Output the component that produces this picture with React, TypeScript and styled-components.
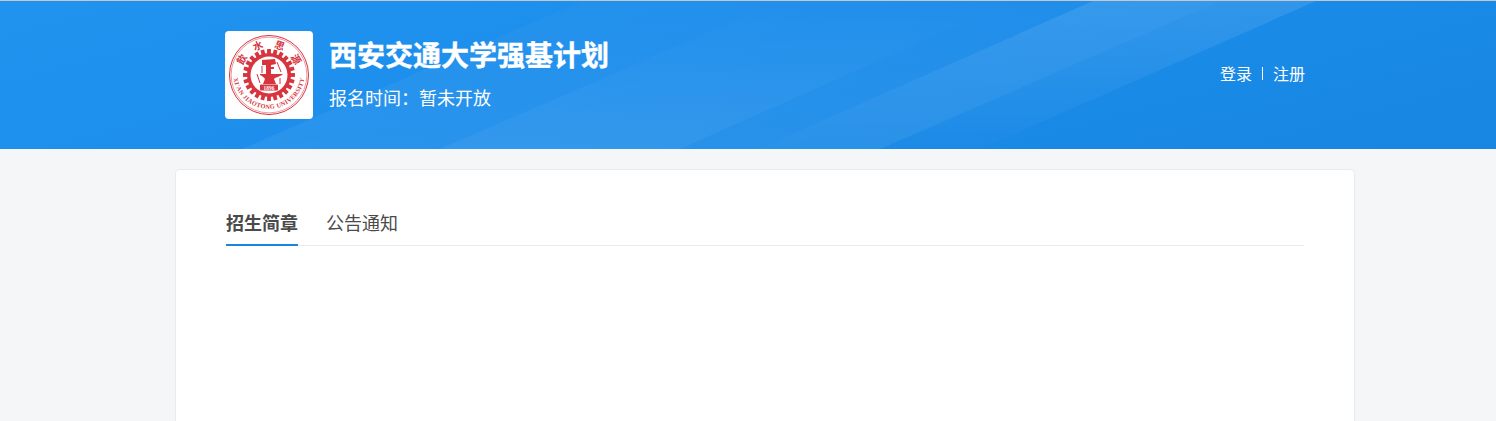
import React from 'react';
import styled, { createGlobalStyle } from 'styled-components';

const GlobalStyle = createGlobalStyle`
  html, body {
    margin: 0;
    padding: 0;
    height: 100%;
    overflow: hidden;
    background-color: #f5f6f8;
    font-family: "Noto Sans CJK SC", "Noto Sans", sans-serif;
  }
`;

const Header = styled.header`
  position: relative;
  height: 148px;
  border-top: 1px solid #c4c8cc;
  overflow: hidden;
  background: linear-gradient(165deg, #2093ef 0%, #1c8deb 45%, #1786e2 100%);
`;

const HeaderBands = styled.svg`
  position: absolute;
  inset: 0;
  width: 100%;
  height: 100%;
`;

const HeaderInner = styled.div`
  position: relative;
  width: 1080px;
  height: 100%;
  margin-left: 225px;
  display: flex;
  align-items: center;
  justify-content: space-between;
`;

const Brand = styled.div`
  display: flex;
  align-items: center;
  gap: 16px;
`;

const LogoBox = styled.div`
  width: 88px;
  height: 88px;
  border-radius: 4px;
  background-color: #fff;
  display: flex;
  align-items: center;
  justify-content: center;
`;

const BrandText = styled.div`
  display: flex;
  flex-direction: column;
  gap: 13px;
  margin-bottom: 4px;
  color: #fff;
`;

const Title = styled.h1`
  margin: 0;
  font-size: 28px;
  line-height: 34px;
  font-weight: 700;
  -webkit-text-stroke: 0.4px #fff;
`;

const Subtitle = styled.p`
  margin: 0;
  font-size: 18px;
  line-height: 26px;
`;

const AuthLinks = styled.nav`
  display: flex;
  align-items: center;
  color: #fff;
  font-size: 16px;
  line-height: 22px;
  margin-top: -4px;
`;

const AuthLink = styled.a`
  color: inherit;
  text-decoration: none;
`;

const AuthDivider = styled.span`
  width: 1px;
  height: 13px;
  margin: 0 10px;
  background-color: #fff;
`;

const Main = styled.main`
  width: 1180px;
  margin: 20px 0 0 175px;
  box-sizing: border-box;
  min-height: 400px;
  padding: 32px 50px 0;
  background-color: #fff;
  border: 1px solid #e8eaec;
  border-radius: 4px;
`;

const Tabs = styled.div`
  display: flex;
  gap: 28px;
  border-bottom: 1px solid #e8eaec;
`;

const Tab = styled.div<{ $active?: boolean }>`
  height: 44px;
  box-sizing: border-box;
  margin-bottom: -1px;
  font-size: 18px;
  line-height: 40px;
  font-weight: ${(p) => (p.$active ? 700 : 400)};
  color: #4a4a4a;
  border-bottom: 2px solid ${(p) => (p.$active ? '#1786e2' : 'transparent')};
`;

const SEAL = '#d8343e';

function gearTeeth() {
  const teeth = [];
  for (let i = 0; i < 24; i++) {
    teeth.push(<rect key={i} x="-1.9" y="-26" width="3.8" height="6" fill={SEAL} transform={`rotate(${i * 15})`} />);
  }
  return teeth;
}

function SchoolSeal() {
  return (
    <svg width="82" height="82" viewBox="-41 -41 82 82">
      <defs>
        <path id="sealBottom" d="M -35.8 -2 A 35.8 35.8 0 0 0 35.8 -2" />
      </defs>
      <circle r="39.5" fill="none" stroke={SEAL} strokeWidth="1" />
      <circle r="37.9" fill="none" stroke={SEAL} strokeWidth="0.5" />
      <g fill={SEAL} fontFamily='"Noto Sans CJK TC", sans-serif' fontSize="10" fontWeight="700" textAnchor="middle">
        <text transform="rotate(-60) translate(0 -27.6)">飲</text>
        <text transform="rotate(-21) translate(0 -27.6)">水</text>
        <text transform="rotate(20) translate(0 -27.6)">思</text>
        <text transform="rotate(60) translate(0 -27.6)">源</text>
      </g>
      <text fill={SEAL} fontFamily='"Liberation Serif", serif' fontSize="6.3" fontWeight="700" letterSpacing="0.3">
        <textPath href="#sealBottom" startOffset="50%" textAnchor="middle">
          XI'AN JIAOTONG UNIVERSITY
        </textPath>
      </text>
      {gearTeeth()}
      <circle r="22" fill={SEAL} />
      <circle r="18.5" fill="#fff" />
      <path
        fill={SEAL}
        d="M -7 -15 L 6 -16 L 7 -11 L 2 -10 L 2 -8 L 5 -8 L 5 -6 L 2 -6 L 2 -1 L 14 -1 C 11 2 7 2 5 4 L 7 9 L -6 9 L -4 4 C -5 2 -7 1 -9 0 L -9 -1 L -3 -1 L -3 -10 L -7 -10 Z"
      />
      <path fill="none" stroke={SEAL} strokeWidth="1" d="M -7 -9 L -7 -2 M 8 -13 L 12 -3 M -12 -1 L -9 8 M 11 3 L 11 9" />
      <rect x="-9" y="9.5" width="18" height="6" rx="0.8" fill={SEAL} />
      <text x="0" y="14.6" fill="#fff" fontFamily='"Liberation Serif", serif' fontSize="5.4" fontWeight="700" textAnchor="middle">
        1896
      </text>
    </svg>
  );
}

function Bands() {
  return (
    <HeaderBands viewBox="0 0 1496 148" preserveAspectRatio="none">
      <defs>
        <linearGradient id="bandRise" x1="0" y1="0" x2="0" y2="1">
          <stop offset="0" stopColor="#fff" stopOpacity="0.02" />
          <stop offset="1" stopColor="#fff" stopOpacity="0.06" />
        </linearGradient>
        <linearGradient id="bandMid" x1="0" y1="0" x2="0" y2="1">
          <stop offset="0" stopColor="#fff" stopOpacity="0" />
          <stop offset="1" stopColor="#fff" stopOpacity="0.05" />
        </linearGradient>
        <linearGradient id="bandTop" x1="0" y1="0" x2="0" y2="1">
          <stop offset="0" stopColor="#fff" stopOpacity="0.1" />
          <stop offset="1" stopColor="#fff" stopOpacity="0.01" />
        </linearGradient>
      </defs>
      <polygon points="242,148 582,0 1220,0 880,148" fill="url(#bandRise)" />
      <polygon points="440,148 780,0 1012,0 680,148" fill="url(#bandMid)" />
      <polygon points="758,148 1093,0 1316,0 980,148" fill="url(#bandTop)" />
    </HeaderBands>
  );
}

export default function App() {
  return (
    <>
      <GlobalStyle />
      <Header>
        <Bands />
        <HeaderInner>
          <Brand>
            <LogoBox>
              <SchoolSeal />
            </LogoBox>
            <BrandText>
              <Title>西安交通大学强基计划</Title>
              <Subtitle>报名时间：暂未开放</Subtitle>
            </BrandText>
          </Brand>
          <AuthLinks>
            <AuthLink href="#">登录</AuthLink>
            <AuthDivider />
            <AuthLink href="#">注册</AuthLink>
          </AuthLinks>
        </HeaderInner>
      </Header>
      <Main>
        <Tabs>
          <Tab $active>招生简章</Tab>
          <Tab>公告通知</Tab>
        </Tabs>
      </Main>
    </>
  );
}
